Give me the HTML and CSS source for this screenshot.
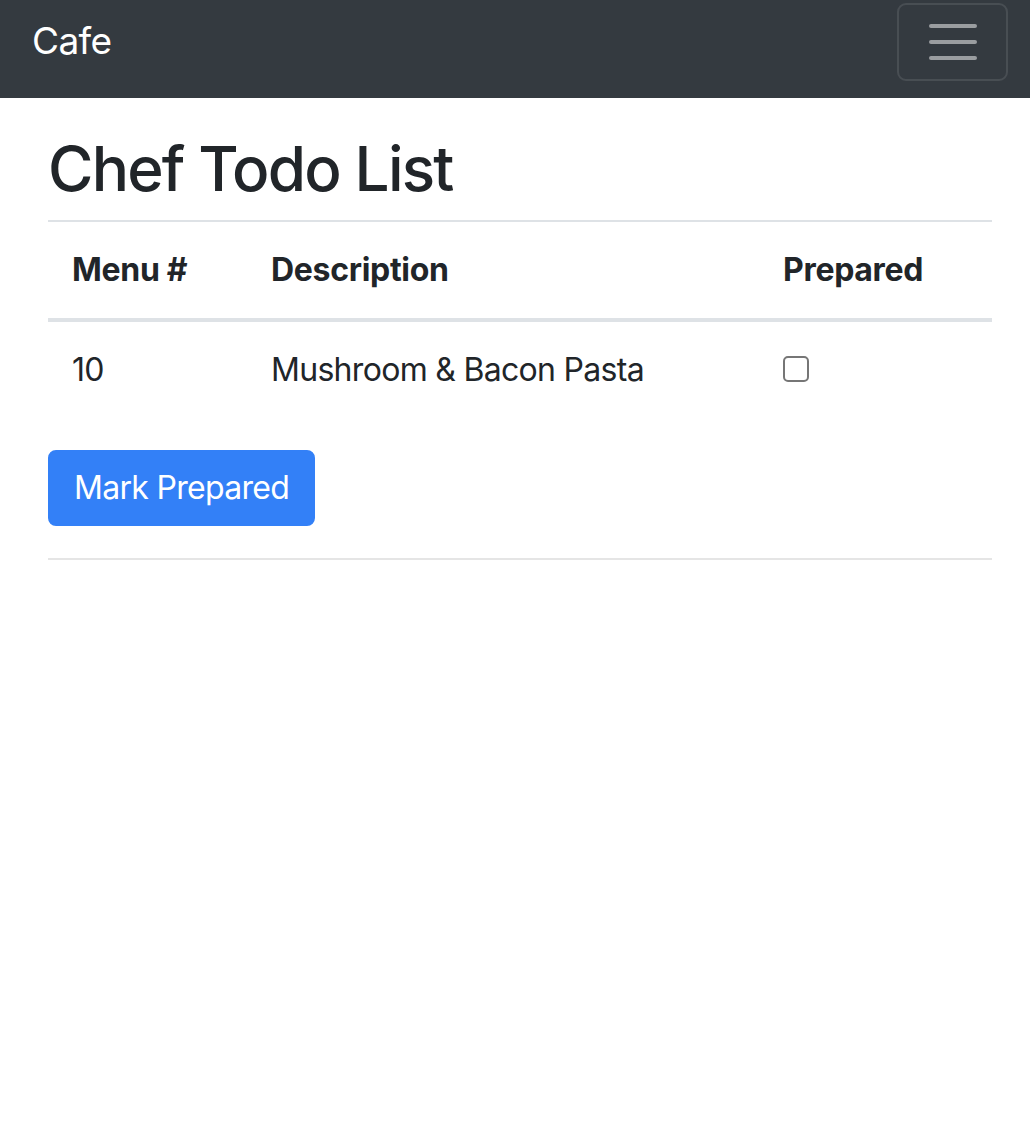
FILE: index.html
```html
<!DOCTYPE html>
<html lang="en">
<head>
<meta charset="utf-8">
<title>Cafe</title>
<link rel="stylesheet" href="styles.css">
</head>
<body>
<nav class="navbar">
  <span class="brand">Cafe</span>
  <button class="toggler" type="button" aria-label="Toggle navigation">
    <span class="toggler-icon"><span></span><span></span><span></span></span>
  </button>
</nav>
<main class="container">
  <h1 class="title">Chef Todo List</h1>
  <table class="table">
    <thead>
      <tr>
        <th class="col-num">Menu #</th>
        <th class="col-desc">Description</th>
        <th class="col-prep">Prepared</th>
      </tr>
    </thead>
    <tbody>
      <tr>
        <td>10</td>
        <td>Mushroom &amp; Bacon Pasta</td>
        <td><span class="check"></span></td>
      </tr>
    </tbody>
  </table>
  <button class="btn-primary" type="button">Mark Prepared</button>
  <hr class="rule">
</main>
</body>
</html>
```

FILE: styles.css
```css
* { box-sizing: border-box; }
html, body { margin: 0; padding: 0; }
body {
  font-family: Inter, "Noto Sans", "Liberation Sans", sans-serif;
  color: #212529;
  background: #fff;
  font-size: 32px;
  line-height: 1.5;
  letter-spacing: -0.7px;
}
.navbar {
  display: flex;
  justify-content: space-between;
  align-items: flex-start;
  height: 98px;
  background: #343a40;
  padding: 0 22px 0 32px;
}
.brand {
  color: #fff;
  font-size: 37px;
  line-height: 44px;
  margin-top: 19px;
  letter-spacing: -0.6px;
}
.toggler {
  margin-top: 3px;
  width: 111px;
  height: 78px;
  background: transparent;
  border: 2px solid rgba(255,255,255,0.1);
  border-radius: 9px;
  display: flex;
  align-items: center;
  justify-content: center;
  padding: 0;
}
.toggler-icon {
  display: flex;
  flex-direction: column;
  gap: 12px;
  width: 48px;
}
.toggler-icon span {
  display: block;
  height: 4px;
  border-radius: 2px;
  background: rgba(255,255,255,0.5);
}
.container {
  padding: 0 38px 0 48px;
}
.title {
  font-size: 62px;
  font-weight: 500;
  line-height: 74px;
  margin: 34px 0 14px;
  letter-spacing: -1.8px;
}
.table {
  width: 100%;
  border-collapse: collapse;
  margin-bottom: 32px;
}
.table th, .table td {
  text-align: left;
  padding: 24px;
  vertical-align: top;
  border-top: 2px solid #dee2e6;
  line-height: 48px;
}
.table th { font-weight: 700; letter-spacing: -0.3px; }
.table thead th { border-bottom: 4px solid #dee2e6; }
.col-num { width: 199px; }
.col-desc { width: 512px; }
.check {
  display: inline-block;
  width: 26px;
  height: 26px;
  border: 2px solid #767676;
  border-radius: 5px;
  vertical-align: -1px;
}
.btn-primary {
  display: block;
  font-family: inherit;
  font-size: 32px;
  line-height: 48px;
  letter-spacing: -0.7px;
  padding: 12px 24px;
  color: #fff;
  background: #3380f7;
  border: 2px solid #3380f7;
  border-radius: 8px;
}
.rule {
  margin: 32px 0 0;
  border: 0;
  border-top: 2px solid rgba(0,0,0,0.1);
}
```
